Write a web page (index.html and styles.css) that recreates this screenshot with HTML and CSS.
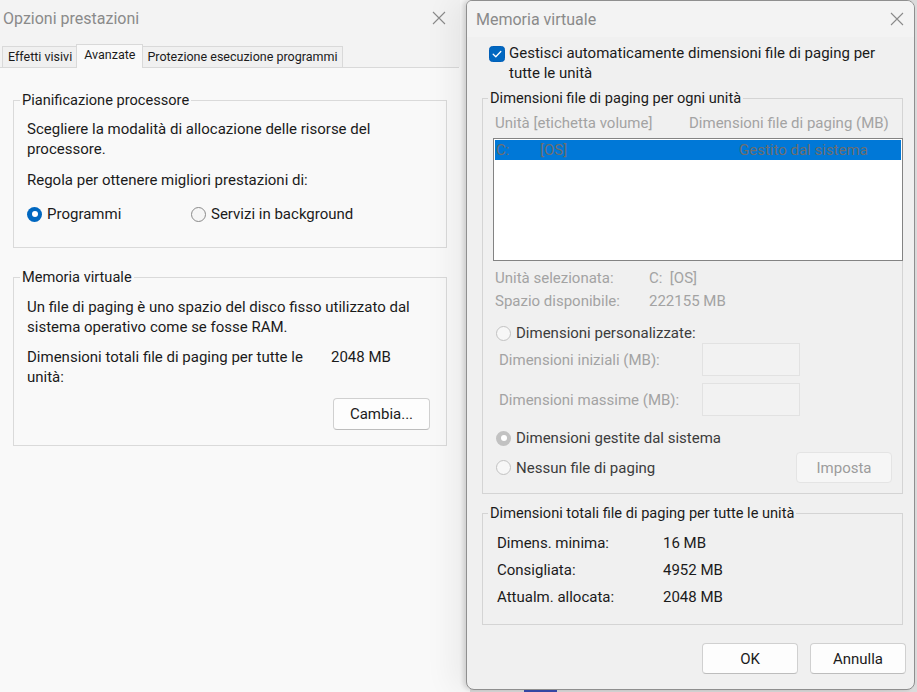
FILE: index.html
```html
<!DOCTYPE html>
<html lang="it">
<head>
  <meta charset="UTF-8" />
  <title>Opzioni prestazioni - Memoria virtuale</title>
  <link rel="stylesheet" href="styles.css">
</head>
<body>
  <div class="desktop">

    <!-- finestra dietro: Opzioni prestazioni -->
    <div class="window perf">
      <div class="titlebar">
        <span class="title">Opzioni prestazioni</span>
        <svg class="close" width="14" height="14" viewBox="0 0 14 14"><path d="M1 1 L13 13 M13 1 L1 13" stroke="#8a8a8a" stroke-width="1.1" fill="none"/></svg>
      </div>
      <div class="tabs">
        <div class="tab">Effetti visivi</div>
        <div class="tab active">Avanzate</div>
        <div class="tab">Protezione esecuzione programmi</div>
      </div>
      <div class="tab-page">
        <fieldset class="group cpu">
          <legend>Pianificazione processore</legend>
          <p class="text">Scegliere la modalità di allocazione delle risorse del<br>processore.</p>
          <p class="text gap">Regola per ottenere migliori prestazioni di:</p>
          <div class="radio-row">
            <div class="radio-opt first"><span class="radio checked"></span><span class="radio-label">Programmi</span></div>
            <div class="radio-opt"><span class="radio"></span><span class="radio-label">Servizi in background</span></div>
          </div>
        </fieldset>

        <fieldset class="group vm-info">
          <legend>Memoria virtuale</legend>
          <p class="text">Un file di paging è uno spazio del disco fisso utilizzato dal<br>sistema operativo come se fosse RAM.</p>
          <div class="total-row">
            <span>Dimensioni totali file di paging per tutte le<br>unità:</span>
            <span>2048 MB</span>
          </div>
          <div class="btn-row">
            <button class="btn">Cambia...</button>
          </div>
        </fieldset>
      </div>
    </div>

    <!-- finestra davanti: Memoria virtuale -->
    <div class="window vmem">
      <div class="titlebar">
        <span class="title">Memoria virtuale</span>
        <svg class="close" width="14" height="14" viewBox="0 0 14 14"><path d="M1 1 L13 13 M13 1 L1 13" stroke="#8a8a8a" stroke-width="1.1" fill="none"/></svg>
      </div>

      <div class="auto-row">
        <svg class="checkbox" width="16" height="16" viewBox="0 0 16 16">
          <rect x="0.5" y="0.5" width="15" height="15" rx="3" fill="#0067c0" stroke="#005fb8"/>
          <path d="M4.2 8.3 L6.8 10.8 L11.8 5.5" stroke="#fff" stroke-width="1.3" fill="none" stroke-linecap="round" stroke-linejoin="round"/>
        </svg>
        <span>Gestisci automaticamente dimensioni file di paging per<br>tutte le unità</span>
      </div>

      <fieldset class="group drives">
        <legend>Dimensioni file di paging per ogni unità</legend>
        <div class="list-head">
          <span class="col-drive">Unità [etichetta volume]</span>
          <span>Dimensioni file di paging (MB)</span>
        </div>
        <div class="listbox">
          <div class="list-item selected">
            <span class="c-drive">C:</span>
            <span class="c-label">[OS]</span>
            <span class="c-size">Gestito dal sistema</span>
          </div>
        </div>

        <div class="info-grid">
          <span>Unità selezionata:</span><span>C:&nbsp; [OS]</span>
          <span>Spazio disponibile:</span><span>222155 MB</span>
        </div>

        <div class="option first">
          <span class="radio off"></span><span class="radio-label">Dimensioni personalizzate:</span>
        </div>
        <div class="size-row">
          <span>Dimensioni iniziali (MB):</span>
          <div class="size-input"></div>
        </div>
        <div class="size-row second">
          <span>Dimensioni massime (MB):</span>
          <div class="size-input"></div>
        </div>
        <div class="option system">
          <span class="radio off on"></span><span class="radio-label">Dimensioni gestite dal sistema</span>
        </div>
        <div class="option none">
          <span class="radio off"></span><span class="radio-label">Nessun file di paging</span>
          <button class="btn disabled">Imposta</button>
        </div>
      </fieldset>

      <fieldset class="group totals">
        <legend>Dimensioni totali file di paging per tutte le unità</legend>
        <div class="totals-grid">
          <span>Dimens. minima:</span><span>16 MB</span>
          <span>Consigliata:</span><span>4952 MB</span>
          <span>Attualm. allocata:</span><span>2048 MB</span>
        </div>
      </fieldset>

      <div class="dialog-buttons">
        <button class="btn">OK</button>
        <button class="btn">Annulla</button>
      </div>
    </div>

    <div class="task-item"></div>
  </div>
</body>
</html>
```

FILE: styles.css
```css
body {
  margin: 0;
  font-family: Roboto, "Liberation Sans", sans-serif;
  font-size: 15px;
  color: #1b1b1b;
  background: #e6e6e6;
}
.desktop {
  position: relative;
  width: 917px;
  height: 692px;
  overflow: hidden;
  background: #dcdcdc;
}
.window {
  position: absolute;
  top: 0;
  box-sizing: border-box;
}
.titlebar {
  height: 36px;
  display: flex;
  align-items: center;
  justify-content: space-between;
}
.title {
  color: #8a8a8a;
  font-size: 16px;
}
.close {
  display: block;
}
p {
  margin: 0;
}
.text {
  line-height: 20px;
}
.text.gap {
  margin-top: 11px;
}

/* gruppi */
.group {
  margin: 0;
  padding: 0;
  border: 1px solid #dadada;
  box-sizing: border-box;
  min-width: 0;
}
.group legend {
  padding: 0 2px;
  line-height: 20px;
  font-size: 14.6px;
}

/* radio */
.radio {
  width: 15px;
  height: 15px;
  box-sizing: border-box;
  border-radius: 50%;
  border: 1px solid #8a8a8a;
  background: #f6f6f6;
  display: inline-block;
  position: relative;
  flex-shrink: 0;
}
.radio.checked {
  border: none;
  background: #0067c0;
}
.radio.checked::after,
.radio.on::after {
  content: "";
  position: absolute;
  left: 4.5px;
  top: 4.5px;
  width: 6px;
  height: 6px;
  border-radius: 50%;
  background: #fff;
}
.radio.off {
  border-color: #c2c2c2;
  background: #f7f7f7;
}
.radio.on {
  border: none;
  background: #c2c2c2;
}
.radio-label {
  margin-left: 5px;
  line-height: 20px;
}

/* pulsanti */
.btn {
  font-family: inherit;
  font-size: 15px;
  color: #1b1b1b;
  width: 97px;
  height: 32px;
  background: #fdfdfd;
  border: 1px solid #d0d0d0;
  border-bottom-color: #bdbdbd;
  border-radius: 4px;
  padding: 0;
}
.btn.disabled {
  color: #9c9c9c;
  background: #f6f6f6;
  border-color: #e4e4e4;
}

/* ---- Opzioni prestazioni ---- */
.perf {
  left: 0;
  width: 470px;
  height: 692px;
  background: #f9f9f9;
}
.perf .titlebar {
  background: #f3f3f3;
  padding: 0 14px 0 3px;
  margin-right: 10px;
}
.tabs {
  height: 31px;
  background: #f3f3f3;
  display: flex;
  align-items: flex-end;
  padding-left: 2px;
  margin-right: 10px;
  font-size: 12.5px;
}
.tab {
  height: 21px;
  line-height: 20px;
  padding: 0 5px;
  box-sizing: border-box;
  border: 1px solid #d9d9d9;
  border-bottom: none;
  background: #f0f0f0;
  margin-right: -1px;
}
.tab.active {
  height: 24px;
  margin: 0 -2px -1px -1px;
  line-height: 20px;
  padding: 0 7px;
  background: #f9f9f9;
  position: relative;
  z-index: 1;
}
.tab-page {
  border-top: 1px solid #d9d9d9;
  padding: 22px 0 0 13px;
  margin-right: 11px;
}
.perf .group {
  width: 434px;
  padding: 9px 16px 23px 13px;
}
.perf .group legend {
  margin-left: -7px;
}
.radio-row {
  margin-top: 14px;
  display: flex;
  align-items: center;
  height: 20px;
}
.radio-opt {
  display: flex;
  align-items: center;
}
.radio-opt.first {
  width: 164px;
}
.vm-info.group {
  margin-top: 19px;
  padding: 10px 16px 15px 13px;
}
.total-row {
  margin-top: 10px;
  display: grid;
  grid-template-columns: 304px auto;
  line-height: 20px;
}
.btn-row {
  margin-top: 11px;
  display: flex;
  justify-content: flex-end;
}

/* ---- Memoria virtuale ---- */
.vmem {
  left: 466px;
  width: 449px;
  height: 690px;
  background: #f0f0f0;
  border: 1px solid #8f8f8f;
  border-radius: 6px 8px 8px 8px;
  box-shadow: -3px 0 4px rgba(0, 0, 0, 0.12), -14px 0 30px rgba(0, 0, 0, 0.06);
  overflow: hidden;
}
.vmem .titlebar {
  padding: 0 10px 0 9px;
  background: #f3f3f3;
}
.auto-row {
  display: flex;
  align-items: flex-start;
  margin-top: 6px;
  padding-left: 22px;
  line-height: 20px;
}
.checkbox {
  margin-top: 3px;
  margin-right: 4px;
  flex-shrink: 0;
}
.vmem .group {
  margin-left: 15px;
  width: 421px;
  border-color: #d4d4d4;
}
.drives.group {
  margin-top: 5px;
  padding: 5px 0 10px 12px;
}
.drives.group legend {
  margin-left: -7px;
}
.list-head {
  display: flex;
  color: #a3a3a3;
  line-height: 20px;
}
.col-drive {
  width: 194px;
}
.listbox {
  margin: 5px -1px 0 -2px;
  height: 123px;
  box-sizing: border-box;
  border: 1px solid #838383;
  background: #fff;
  padding: 1px;
}
.list-item {
  height: 20px;
  line-height: 20px;
  display: flex;
  color: #6e6e6e;
}
.list-item.selected {
  background: #0078d7;
}
.c-drive {
  margin-left: 1px;
  width: 44px;
}
.c-label {
  width: 199px;
}
.info-grid {
  margin-top: 7px;
  display: grid;
  grid-template-columns: 154px auto;
  row-gap: 3px;
  line-height: 20px;
  color: #a3a3a3;
}
.option {
  display: flex;
  align-items: center;
  height: 20px;
  padding-left: 1px;
  color: #3c3c3c;
}
.option.first {
  margin-top: 12px;
}
.option.system {
  margin-top: 12px;
}
.option.none {
  margin-top: 4px;
  height: 31px;
}
.option .btn {
  margin-left: auto;
  margin-right: 10px;
  height: 31px;
  width: 96px;
}
.size-row {
  display: flex;
  align-items: center;
  height: 33px;
  padding-left: 4px;
  color: #a3a3a3;
}
.size-row.second {
  margin-top: 7px;
}
.size-input {
  margin-left: auto;
  margin-right: 102px;
  width: 98px;
  height: 33px;
  box-sizing: border-box;
  border: 1px solid #e2e2e2;
  background: #f2f2f2;
}
.totals.group {
  margin-top: 9px;
  padding: 10px 0 17px 14px;
}
.totals.group legend {
  margin-left: -9px;
}
.totals-grid {
  display: grid;
  grid-template-columns: 166px auto;
  grid-auto-rows: 20px;
  row-gap: 7px;
  line-height: 20px;
}
.dialog-buttons {
  margin-top: 18px;
  display: flex;
  justify-content: flex-end;
  gap: 12px;
  padding-right: 8px;
}
.dialog-buttons .btn {
  width: 96px;
  height: 31px;
}
.task-item {
  position: absolute;
  left: 524px;
  top: 690px;
  width: 33px;
  height: 2px;
  background: #3446a3;
}
```
